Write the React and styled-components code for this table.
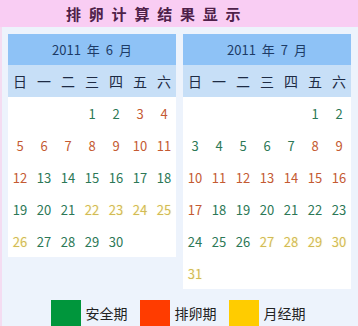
import React from "react";
import styled, { createGlobalStyle } from "styled-components";

const Global = createGlobalStyle`
  html, body { margin: 0; padding: 0; background: #edf3fc; }
  body { font-family: "Noto Sans CJK SC", "Liberation Sans", sans-serif; }
`;

const Page = styled.div`
  width: 358px;
  height: 326px;
  overflow: hidden;
  background: #edf3fc;
`;

const TitleBar = styled.div`
  height: 27px;
  background: #f9cdf3;
  display: flex;
  align-items: center;
  padding-left: 66px;
  box-sizing: border-box;
`;

const Title = styled.h1`
  margin: 0;
  font-size: 15px;
  font-weight: 700;
  color: #4e2149;
  letter-spacing: 7.8px;
  line-height: 1;
`;

const Body = styled.div`
  border-left: 2px solid #f4dcf1;
  padding: 7px 6px 0 6px;
`;

const Cards = styled.div`
  display: flex;
  gap: 7px;
  align-items: flex-start;
`;

const Card = styled.div`
  width: 168px;
  background: #fff;
`;

const MonthHead = styled.div`
  height: 31px;
  background: #8ec2f6;
  color: #1d3b66;
  display: flex;
  align-items: center;
  justify-content: center;
  font-size: 13px;
  word-spacing: 3px;
`;

const Grid = styled.div`
  display: grid;
  grid-template-columns: repeat(7, 24px);
  grid-auto-rows: 32px;
`;

const WeekRow = styled(Grid)`
  background: #c7dff7;
`;

const Weekday = styled.div`
  display: flex;
  align-items: center;
  justify-content: center;
  font-size: 14px;
  color: #1e2b44;
`;

const colors = {
  g: "#2c7856",
  r: "#c45a32",
  y: "#d1bb55",
};

const Day = styled.div`
  display: flex;
  align-items: center;
  justify-content: center;
  font-size: 13px;
  color: ${(p) => colors[p.$k]};
  text-shadow: ${(p) => (p.$k === "y" ? "0 0 2px #fff3c0" : "none")};
`;

const Legend = styled.div`
  display: flex;
  justify-content: center;
  align-items: center;
  gap: 12px;
  margin-top: 11px;
  padding-right: 4px;
`;

const LegendItem = styled.div`
  display: flex;
  align-items: center;
  gap: 5px;
`;

const Swatch = styled.span`
  display: block;
  width: 30px;
  height: 26px;
  background: ${(p) => p.$c};
`;

const LegendText = styled.span`
  font-size: 14px;
  color: #222;
`;

function Calendar({ year, month, start, days, kinds }) {
  const cells = [];
  for (let i = 0; i < start; i++) cells.push(<div key={"e" + i} />);
  for (let d = 1; d <= days; d++)
    cells.push(
      <Day key={d} $k={kinds(d)}>
        {d}
      </Day>
    );
  return (
    <Card>
      <MonthHead>
        {year} 年 {month} 月
      </MonthHead>
      <WeekRow>
        {["日", "一", "二", "三", "四", "五", "六"].map((w) => (
          <Weekday key={w}>{w}</Weekday>
        ))}
      </WeekRow>
      <Grid>{cells}</Grid>
    </Card>
  );
}

const juneKind = (d) =>
  d >= 3 && d <= 12 ? "r" : d >= 22 && d <= 26 ? "y" : "g";
const julyKind = (d) =>
  d >= 8 && d <= 17 ? "r" : d >= 27 ? "y" : "g";

export default function App() {
  return (
    <Page>
      <Global />
      <TitleBar>
        <Title>排卵计算结果显示</Title>
      </TitleBar>
      <Body>
        <Cards>
          <Calendar year={2011} month={6} start={3} days={30} kinds={juneKind} />
          <Calendar year={2011} month={7} start={5} days={31} kinds={julyKind} />
        </Cards>
        <Legend>
          <LegendItem>
            <Swatch $c="#00963c" />
            <LegendText>安全期</LegendText>
          </LegendItem>
          <LegendItem>
            <Swatch $c="#ff3c00" />
            <LegendText>排卵期</LegendText>
          </LegendItem>
          <LegendItem>
            <Swatch $c="#ffcc00" />
            <LegendText>月经期</LegendText>
          </LegendItem>
        </Legend>
      </Body>
    </Page>
  );
}
